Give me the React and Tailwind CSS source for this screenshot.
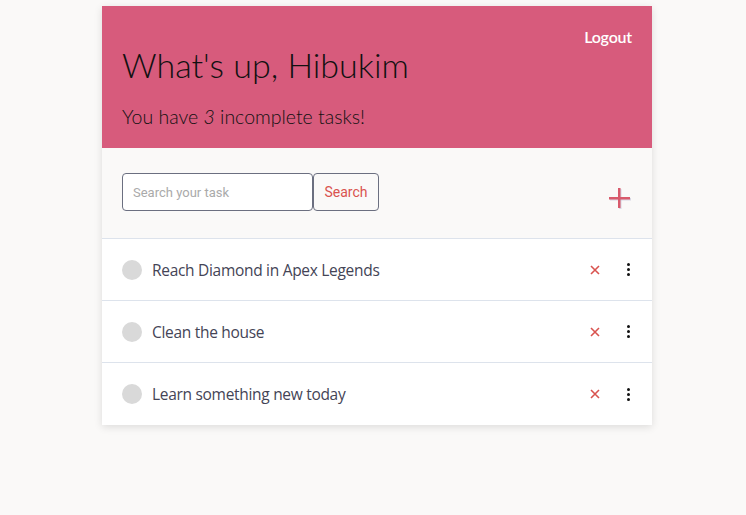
import React from "react";

const tasks = [
  "Reach Diamond in Apex Legends",
  "Clean the house",
  "Learn something new today",
];

function Dots() {
  return (
    <div className="flex flex-col items-center gap-[2px]">
      <span className="w-[3px] h-[3px] bg-[#111] rounded-full" />
      <span className="w-[3px] h-[3px] bg-[#111] rounded-full" />
      <span className="w-[3px] h-[3px] bg-[#111] rounded-full" />
    </div>
  );
}

export default function App() {
  return (
    <div className="min-h-[515px] w-full bg-[#faf9f8] pt-[6px]">
      <div className="ml-[102px] w-[550px] bg-white shadow-[0_2px_8px_rgba(0,0,0,0.12)]">
        {/* Header */}
        <div className="bg-[#d75b7c] h-[142px] pl-5 pr-5 pt-[19px] font-['Lato',sans-serif]">
          <div className="flex justify-end">
            <span className="text-white text-[16px] font-semibold tracking-[-0.2px]">Logout</span>
          </div>
          <h1 className="text-[#111] text-[34px] font-light leading-none -mt-[1px]">What's up, Hibukim</h1>
          <p className="text-[#111] text-[19.5px] font-light mt-[20px]">
            You have <i>3</i> incomplete tasks!
          </p>
        </div>

        {/* Search */}
        <div className="bg-[#faf9f8] h-[91px] pl-5 pr-[21px] flex items-center justify-between border-b border-[#dde3ec]">
          <div className="flex font-['Roboto',sans-serif] -mt-[2px]">
            <input
              placeholder="Search your task"
              className="w-[191px] h-[38px] border border-[#6b6f80] rounded-[4px] bg-white px-[10px] text-[13px] placeholder:text-[#aaa] outline-none"
            />
            <button className="w-[66px] h-[38px] border border-[#6b6f80] rounded-[4px] bg-transparent text-[14px] text-[#d9534f]">
              Search
            </button>
          </div>
          <svg width="22" height="22" viewBox="0 0 22 22" className="mt-[10px]">
            <rect x="10" y="2" width="2.5" height="20" fill="#b8b8d0" opacity="0.5" />
            <rect x="1" y="11" width="21" height="2.5" fill="#b8b8d0" opacity="0.5" />
            <rect x="9" y="1" width="2.5" height="20" fill="#d85a6c" />
            <rect x="0" y="10" width="21" height="2.5" fill="#d85a6c" />
          </svg>
        </div>

        {/* Tasks */}
        {tasks.map((t, i) => (
          <div
            key={t}
            className={`h-[62px] pl-5 pr-[22px] flex items-center ${i < tasks.length - 1 ? "border-b border-[#dde3ec]" : ""}`}
          >
            <span className="w-5 h-5 rounded-full bg-[#d9d9d9] shrink-0" />
            <span className="ml-[10px] pt-[2px] text-[15.5px] text-[#444456] font-['Open_Sans',sans-serif] tracking-[-0.3px] flex-1">
              {t}
            </span>
            <svg width="10" height="10" viewBox="0 0 10 10" className="mr-[27px]">
              <path d="M1 1 L9 9 M9 1 L1 9" stroke="#d9534f" strokeWidth="1.6" />
            </svg>
            <Dots />
          </div>
        ))}
      </div>
    </div>
  );
}
